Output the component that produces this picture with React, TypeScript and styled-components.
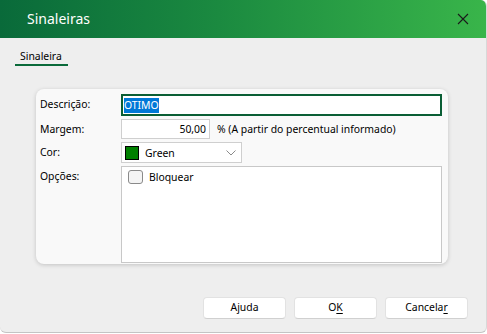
import React from 'react'
import styled, { createGlobalStyle } from 'styled-components'

// ------------------------------------------------ style
const GlobalStyle = createGlobalStyle`
  html, body {
    margin: 0;
    padding: 0;
    background: #ffffff;
  }
  body {
    font-family: 'Segoe UI', 'Noto Sans', sans-serif;
    font-size: 10.4px;
    color: #000;
  }
`
const Window = styled.div`
  width: 486px;
  height: 332px;
  display: flex;
  flex-direction: column;
  background: #eeeeee;
  border-radius: 0 6px 6px 6px;
  border-bottom: 1px solid #c4c4c4;
  border-right: 1px solid #d8d8d8;
  overflow: hidden;
`
const TitleBar = styled.div`
  height: 38px;
  flex: none;
  box-sizing: border-box;
  display: flex;
  align-items: center;
  justify-content: space-between;
  padding: 0 15px 0 27px;
  background: linear-gradient(to right, #096a3a 0%, #1b8a40 45%, #39b54a 100%);
`
const Title = styled.span`
  color: #fff;
  font-size: 14px;
  padding-bottom: 1px;
`
const CloseButton = styled.button`
  border: 0;
  background: transparent;
  padding: 0;
  width: 16px;
  height: 16px;
  display: flex;
  align-items: center;
  justify-content: center;
`
const TabStrip = styled.div`
  display: flex;
  padding: 11px 0 0 15px;
  height: 17px;
`
const Tab = styled.div<{ $active?: boolean }>`
  padding: 0 6px 0 5px;
  line-height: 15px;
  border-bottom: 2px solid ${(p) => (p.$active ? '#0a6a3a' : 'transparent')};
`
const Panel = styled.div`
  margin: 23px 0 0 36px;
  width: 412px;
  height: 175px;
  box-sizing: border-box;
  padding: 5px 6px 1px 4px;
  background: #f9f9f9;
  border-radius: 8px;
  box-shadow: 0 1px 4px rgba(0, 0, 0, 0.18);
  display: grid;
  grid-template-columns: 81px 1fr;
  grid-template-rows: 22px 20px 21px 1fr;
  row-gap: 3px;
`
const Label = styled.label`
  display: flex;
  align-items: flex-start;
  padding-top: 3px;
  line-height: 15px;
`
const TextInput = styled.div<{ $focused?: boolean }>`
  box-sizing: border-box;
  background: #fff;
  border: ${(p) => (p.$focused ? '2px solid #0a5e35' : '1px solid #cfcfcf')};
  display: flex;
  align-items: center;
  padding: 0 ${(p) => (p.$focused ? '1px' : '3px')};
`
const Selected = styled.span`
  background: #0078d7;
  color: #fff;
  line-height: 15px;
`
const Row = styled.div`
  display: flex;
  align-items: center;
  gap: 7px;
`
const NumberInput = styled(TextInput)`
  width: 89px;
  height: 20px;
  justify-content: flex-end;
`
const Combo = styled.div`
  box-sizing: border-box;
  width: 121px;
  height: 21px;
  background: #fff;
  border: 1px solid #cfcfcf;
  display: flex;
  align-items: center;
  padding: 0 5px 0 3px;
  gap: 6px;
`
const Swatch = styled.span<{ $color: string }>`
  width: 12px;
  height: 12px;
  background: ${(p) => p.$color};
  border: 1px solid #000;
`
const ComboText = styled.span`
  flex: 1;
`
const OptionsBox = styled.div`
  box-sizing: border-box;
  background: #fff;
  border: 1px solid #c8c8c8;
  padding: 3px 6px;
`
const CheckRow = styled.div`
  display: flex;
  align-items: center;
  gap: 6px;
`
const Checkbox = styled.span`
  box-sizing: border-box;
  width: 15px;
  height: 14px;
  border: 1px solid #8a8a8a;
  border-radius: 3px;
  background: #f4f4f4;
`
const Footer = styled.div`
  display: flex;
  justify-content: flex-end;
  gap: 8px;
  padding: 33px 18px 0 0;
`
const Button = styled.button`
  width: 83px;
  height: 22px;
  box-sizing: border-box;
  background: #fff;
  border: 1px solid #e2e2e2;
  border-bottom-color: #d0d0d0;
  border-radius: 4px;
  font-family: inherit;
  font-size: 10.4px;
  color: #000;
  padding: 0 0 2px;
`
const Mnemonic = styled.span`
  text-decoration: underline;
  text-underline-offset: 2px;
`

// ------------------------------------------------ comp
export default function App() {
  return (
    <>
      <GlobalStyle />
      <Window>
        <TitleBar>
          <Title>Sinaleiras</Title>
          <CloseButton aria-label="Fechar">
            <svg width="12" height="12" viewBox="0 0 12 12">
              <path d="M1 1 L11 11 M11 1 L1 11" stroke="#1a1a1a" strokeWidth="1.1" />
            </svg>
          </CloseButton>
        </TitleBar>
        <TabStrip>
          <Tab $active>Sinaleira</Tab>
        </TabStrip>
        <Panel>
          <Label>Descrição:</Label>
          <TextInput $focused>
            <Selected>OTIMO</Selected>
          </TextInput>
          <Label>Margem:</Label>
          <Row>
            <NumberInput>50,00</NumberInput>
            <span>% (A partir do percentual informado)</span>
          </Row>
          <Label>Cor:</Label>
          <Row>
            <Combo>
              <Swatch $color="#008000" />
              <ComboText>Green</ComboText>
              <svg width="10" height="6" viewBox="0 0 10 6">
                <path d="M0.5 0.5 L5 5 L9.5 0.5" stroke="#8a8a8a" strokeWidth="1" fill="none" />
              </svg>
            </Combo>
          </Row>
          <Label>Opções:</Label>
          <OptionsBox>
            <CheckRow>
              <Checkbox />
              <span>Bloquear</span>
            </CheckRow>
          </OptionsBox>
        </Panel>
        <Footer>
          <Button>Ajuda</Button>
          <Button>
            O<Mnemonic>K</Mnemonic>
          </Button>
          <Button>
            Cancela<Mnemonic>r</Mnemonic>
          </Button>
        </Footer>
      </Window>
    </>
  )
}
